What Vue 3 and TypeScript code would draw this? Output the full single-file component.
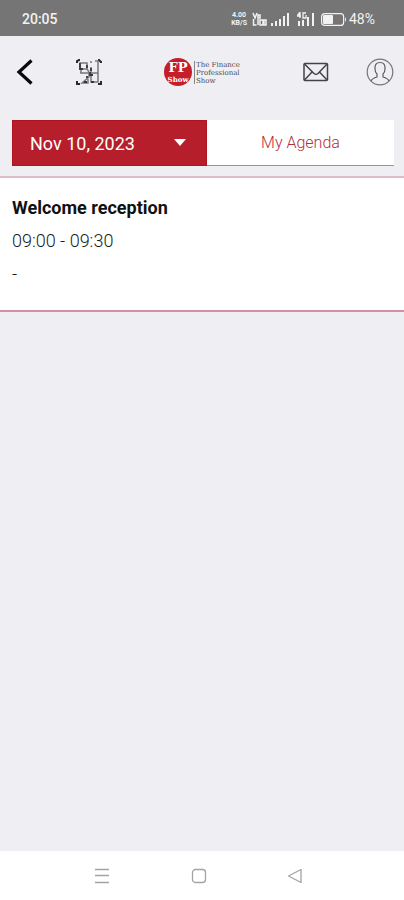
<script setup lang="ts">
import { ref } from 'vue'

interface Session {
  title: string
  time: string
  place: string
}

const days: string[] = ['Nov 10, 2023']
const day = ref(days[0])
const sessions: Session[] = [
  { title: 'Welcome reception', time: '09:00 - 09:30', place: '-' },
]
</script>

<template>
  <div class="screen">
    <div class="status">
      <span class="clock">20:05</span>
      <div class="indicators">
        <span class="stack"><span>4.00</span><span>KB/S</span></span>
        <svg class="volte" width="15" height="14" viewBox="0 0 15 14" fill="none" stroke="currentColor" stroke-width="1.500">
          <path d="M1 1l2 5 2-5M6 3h2v3H6zM1.500 7v6h3M6 7v6M8 8h3v5H8zM12 8h2v5h-2z" />
        </svg>
        <svg class="signal" width="18" height="14" viewBox="0 0 18 14" fill="currentColor">
          <path d="M0 11h2v3H0zM4 9h2v5H4zM8 7h2v7H8zM12 4h2v10h-2zM16 1h2v13h-2z" />
        </svg>
        <svg class="signal-lte" width="18" height="14" viewBox="0 0 18 14">
          <path d="M3 0L0 4h4M3 0v6M9 1H6v5h3V3" fill="none" stroke="currentColor" stroke-width="1.300" />
          <path d="M1 9h2v5H1zM5 8h2v6H5zM10 5h2v9h-2zM15 1h2v13h-2z" fill="currentColor" />
        </svg>
        <svg class="battery" width="26" height="13" viewBox="0 0 26 13">
          <rect x="0.600" y="0.600" width="22" height="11.800" rx="3" fill="none" stroke="currentColor" stroke-width="1.200" />
          <rect x="2" y="2" width="10" height="9" rx="1" fill="currentColor" />
          <path d="M24 4q2 2.500 0 5z" fill="currentColor" />
        </svg>
        <span class="charge">48%</span>
      </div>
    </div>

    <header class="top">
      <div class="side">
        <button class="icon" type="button" aria-label="Back">
          <svg width="18" height="26" viewBox="0 0 18 26" fill="none" stroke="#080808" stroke-width="3.200">
            <path d="M15.500 1.500L3 13l12.500 11.500" />
          </svg>
        </button>
        <button class="icon" type="button" aria-label="Scan code">
          <svg width="28" height="28" viewBox="0 0 28 28" fill="none" stroke="#77777c" stroke-width="1.500">
            <path d="M2 5V3l2-1h1M23 2h1l2 2v1M2 23v3h3M23 26h3v-3" stroke="#29292d" stroke-width="2" />
            <path d="M5 5h7v6H5zM16 3v2M20 3h3v12M5 15h9v4l-7 6h6v-4M16 9v15h7v-9h-7M6 11v4M12 11l2 3" />
            <path d="M5 5v6h3M12 7v3M15 14v3h3M12 18v2M16 24h3M9 24h3M16 10v3" stroke="#38383c" stroke-width="1.800" />
          </svg>
        </button>
      </div>
      <a class="brand" href="#" aria-label="The Finance Professional Show">
        <svg width="82" height="30" viewBox="0 0 82 30">
          <circle cx="14" cy="15" r="14" fill="#c41e2b" />
          <g fill="#fff" font-family="'DejaVu Serif', serif" font-weight="bold" text-anchor="middle">
            <text x="14" y="15" font-size="13">FP</text>
            <text x="14" y="25" font-size="7">Show</text>
          </g>
          <path d="M30.500 4v23" stroke="#85858b" stroke-width="1" />
          <g fill="#4c4c52" font-family="'DejaVu Serif', serif" font-size="7">
            <text x="32" y="10">The Finance</text>
            <text x="32" y="18">Professional</text>
            <text x="32" y="26">Show</text>
          </g>
        </svg>
      </a>
      <div class="side end">
        <button class="icon" type="button" aria-label="Messages">
          <svg width="26" height="20" viewBox="0 0 26 20" fill="none" stroke="#444448" stroke-width="1.500" stroke-linejoin="round">
            <rect x="1" y="1.500" width="23.500" height="17" rx="1" />
            <path d="M1.500 2l9.500 9.500q2 1.500 4 0L24 2M1.500 18l7.500-8M24 18l-7.500-8" />
          </svg>
        </button>
        <button class="icon" type="button" aria-label="Profile">
          <svg width="28" height="28" viewBox="0 0 28 28" fill="none" stroke="#77777c" stroke-width="1.200">
            <circle cx="14" cy="14" r="12.800" />
            <path d="M5 23q1-2.500 6-4v-3q-2-2-2-5-.5-6.500 5-6.500t5 6.500q0 3-2 5v3q5 1.500 6 4" stroke="#5c5c60" />
          </svg>
        </button>
      </div>
    </header>

    <div class="tabs">
      <div class="day">
        <select v-model="day" aria-label="Day">
          <option v-for="d in days" :key="d" :value="d">{{ d }}</option>
        </select>
        <svg class="caret" width="12" height="7" viewBox="0 0 12 7" fill="#fff"><path d="M0 0h12L6 7z" /></svg>
      </div>
      <button class="agenda" type="button">My Agenda</button>
    </div>

    <main class="list">
      <article v-for="s in sessions" :key="s.title" class="session">
        <h2>{{ s.title }}</h2>
        <p>{{ s.time }}</p>
        <p>{{ s.place }}</p>
      </article>
    </main>

    <nav class="system">
      <button class="icon" type="button" aria-label="Recent apps">
        <svg width="16" height="16" viewBox="0 0 16 16" fill="none" stroke="#a3a3a3" stroke-width="1.300"><path d="M1 1.500h14M1 7.500h14M1 14.500h14" /></svg>
      </button>
      <button class="icon" type="button" aria-label="Home">
        <svg width="16" height="16" viewBox="0 0 16 16" fill="none" stroke="#a3a3a3" stroke-width="1.300"><rect x="1.500" y="1.500" width="13" height="13" rx="3" /></svg>
      </button>
      <button class="icon" type="button" aria-label="Previous">
        <svg width="16" height="16" viewBox="0 0 16 16" fill="none" stroke="#a3a3a3" stroke-width="1.300" stroke-linejoin="round"><path d="M14 1.500v13L1.500 8z" /></svg>
      </button>
    </nav>
  </div>
</template>

<style>
body {
  margin: 0;
}
</style>

<style scoped>
.screen {
  display: flex;
  flex-direction: column;
  min-height: 100vh;
  background: #efeef3;
  color: #1c1c1c;
  font-family: Roboto, sans-serif;
}
.status {
  display: flex;
  align-items: center;
  justify-content: space-between;
  box-sizing: border-box;
  height: 36px;
  padding: 2px 29px 0 22px;
  background: #757575;
  color: #f2f2f2;
  font-size: 14px;
  line-height: 16px;
}
.clock {
  font-weight: 500;
}
.indicators {
  display: flex;
  align-items: center;
}
.stack {
  display: flex;
  flex-direction: column;
  font-size: 7px;
  font-weight: 700;
  line-height: 8px;
  text-align: center;
}
.volte {
  margin-left: 5px;
}
.signal {
  margin-left: 4px;
}
.signal-lte {
  margin-left: 8px;
}
.battery {
  margin-left: 6px;
}
.charge {
  margin-left: 2px;
}
.top {
  display: flex;
  align-items: center;
  height: 72px;
  padding: 0 10px 0 16px;
}
.side {
  display: flex;
  flex: 1;
  align-items: center;
  gap: 41px;
}
.end {
  justify-content: flex-end;
  gap: 37px;
}
.icon {
  display: flex;
  align-items: center;
  justify-content: center;
  padding: 0;
  border: 0;
  background: none;
}
.brand {
  display: flex;
}
.tabs {
  display: grid;
  grid-template-columns: 195px 1fr;
  height: 46px;
  margin: 12px 10px 10px 12px;
}
.day {
  position: relative;
  display: grid;
}
.day select {
  appearance: none;
  width: 100%;
  padding: 0 32px 0 17px;
  border: 1px solid #b01420;
  border-radius: 0;
  background: #b71e2b;
  color: #fff;
  font-family: inherit;
  font-size: 18px;
}
.caret {
  position: absolute;
  top: 19px;
  right: 21px;
  pointer-events: none;
}
.agenda {
  padding: 0;
  border: 0;
  border-bottom: 1px solid #c77f8b;
  background: #fff;
  color: #b3303f;
  font-family: inherit;
  font-size: 16px;
  font-weight: 300;
}
.list {
  flex: 1;
}
.session {
  padding: 13px 12px 20px;
  border-top: 2px solid #e0bcc5;
  border-bottom: 2px solid #cf929e;
  background: #fff;
}
.session h2,
.session p {
  margin: 0;
  font-size: 18px;
  line-height: 33px;
}
.session p {
  font-weight: 300;
}
.session h2 {
  color: #111;
  font-weight: 700;
}
.system {
  display: flex;
  align-items: center;
  justify-content: space-between;
  height: 49px;
  padding: 0 101px 0 94px;
  background: #fff;
}
</style>
